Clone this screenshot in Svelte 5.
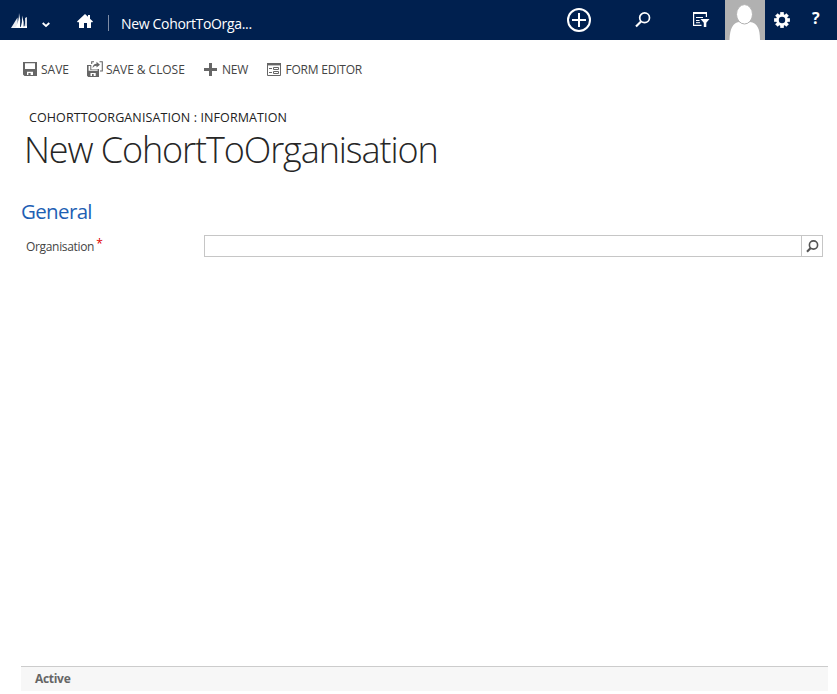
<script>
  const avatarFill = '#b1b1b1';
</script>

<div class="page">
  <header>
    <svg class="logo" width="18" height="16" viewBox="0 0 18 16">
      <path d="M0 15 L6.5 4.5 L7 15Z" fill="#e8ebf0" />
      <path d="M5 14 Q8 8 8 0 Q10 7 9 15Z" fill="#fff" />
      <path d="M9.6 15 Q11.5 9 11 2.5 Q13.4 9 12.6 15Z" fill="#fff" />
      <path d="M13.2 15 Q14.5 10 14 5 L16 4 V15Z" fill="#d5dae3" />
      <path d="M0 15 L16 13 V15Z" fill="#fff" />
    </svg>
    <svg class="chevron" width="8" height="6" viewBox="0 0 8 6"><path d="M.7 1 L4 4 L7.3 1" fill="none" stroke="#fff" stroke-width="1.8" /></svg>
    <svg class="home" width="16" height="15" viewBox="0 0 16 15"><path d="M8 0 L11 2.8 V1 H13 V4.7 L16 7.5 L15 8.5 L14 8 V14 H10 V9 H7 V14 H2 V8 L1 8.5 L0 7.5Z" fill="#fff" /></svg>
    <i class="divider"></i>
    <span class="crumb">New CohortToOrga...</span>
    <svg class="add" width="26" height="26" viewBox="0 0 26 26"><circle cx="13" cy="13" r="11" fill="none" stroke="#fff" stroke-width="2" /><path d="M13 6 V20 M6 13 H20" stroke="#fff" stroke-width="2" /></svg>
    <svg class="search" width="16" height="16" viewBox="0 0 16 16"><circle cx="9.6" cy="5.8" r="4.9" fill="none" stroke="#fff" stroke-width="1.7" /><path d="M6 9.5 L1 14.5" stroke="#fff" stroke-width="2.2" /></svg>
    <svg class="filter" width="17" height="16" viewBox="0 0 17 16">
      <path d="M13.4 5 V1 H.6 V13.4 H8.5" fill="none" stroke="#fff" stroke-width="1.2" /><path d="M0 1 H14" stroke="#fff" stroke-width="2" />
      <path d="M3 5.5 H10 M3 8.5 H6.5 M3 10.7 H7" stroke="#fff" stroke-width="1" />
      <path d="M7.5 7 H16.5 L13.3 10.7 V15 H10.8 V10.7Z" fill="#fff" />
    </svg>
    <svg class="avatar" width="40" height="40" viewBox="0 0 40 40"><rect width="40" height="40" fill={avatarFill} /><path d="M4.5 40 C5 28 8 23 14 22 Q19.5 25 25 22 C32 23 35 28 35 40Z" fill="#fff" /><ellipse cx="19.5" cy="14.3" rx="8" ry="9.7" fill="#fff" stroke={avatarFill} stroke-width="1" /></svg>
    <svg class="gear" width="16" height="16" viewBox="-8 -8 16 16">
      {#each [0, 45, 90, 135] as angle}
        <rect x="-1.8" y="-7.9" width="3.6" height="15.8" transform="rotate({angle})" fill="#fff" />
      {/each}
      <circle r="5.9" fill="#fff" /><circle r="3.2" fill="#00204f" />
    </svg>
    <span class="help">?</span>
  </header>

  <nav>
    <button class="save">
      <svg width="14" height="14" viewBox="0 0 14 14"><path d="M0 0 H14 V14 H1.5 L0 12.5Z M2 1.3 V7 H12 V1.3Z M4 9.7 V13 H5.4 V11 H7.6 V13 H10 V9.7Z" fill="#666" fill-rule="evenodd" /></svg><span>SAVE</span></button>
    <button class="close">
      <svg width="16" height="16" viewBox="0 0 16 16"><path d="M0 4 H4.3 V8.5 H10.7 V8 H12 V16 H1.2 L0 14.8Z M1.6 5 V9.8 H10.6 V9 H3.3 V5Z M3.5 12 V15 H5 V13 H6.7 V15 H8.7 V12Z" fill="#666" fill-rule="evenodd" /><path d="M4.7 3 V.7 H7 M12.5 .7 H15.3 V10 H13" fill="none" stroke="#666" stroke-width="1.1" /><path d="M5.5 7 Q5.8 3 9.5 2.8 V.8 L13 3.7 L9.5 6.5 V4.7 Q7 4.7 5.5 7Z" fill="#666" /></svg><span>SAVE &amp; CLOSE</span></button>
    <button class="new">
      <svg width="13" height="13" viewBox="0 0 13 13"><path d="M6.5 0 V13 M0 6.5 H13" stroke="#666" stroke-width="3" /></svg><span>NEW</span></button>
    <button class="editor">
      <svg width="14" height="13" viewBox="0 0 14 13"><path d="M.5 .5 H13.5 V12.5 H.5Z" fill="none" stroke="#666" /><path d="M0 1.2 H14" stroke="#666" stroke-width="2.4" /><path d="M2 5.5 H5 M2 9.5 H5 M6.5 4.5 H11.5 V6.5 H6.5Z M6.5 8.5 H11.5 V10.5 H6.5Z" fill="none" stroke="#666" /></svg><span>FORM EDITOR</span></button>
  </nav>

  <main>
    <div class="entity">COHORTTOORGANISATION : INFORMATION</div>
    <h1>New CohortToOrganisation</h1>
    <h2>General</h2>
    <div class="field">
      <label for="organisation">Organisation<sup>*</sup></label>
      <div class="lookup">
        <input id="organisation" type="text" />
        <button aria-label="Look up"><svg width="13" height="13" viewBox="0 0 13 13"><circle cx="7.5" cy="5" r="4.1" fill="none" stroke="#555" stroke-width="1.6" /><path d="M4.7 8 L1 11.7" stroke="#555" stroke-width="2.2" /></svg></button>
      </div>
    </div>
  </main>
  <footer>Active</footer>
</div>

<style>
  :global(body) { margin: 0; background: #fff; }
  .page { width: 837px; height: 694px; display: flex; flex-direction: column; overflow: hidden; font-family: "Open Sans", "Noto Sans", sans-serif; font-size: 12px; color: #444; }
  svg { display: block; flex: none; }
  header { height: 40px; flex: none; display: flex; align-items: flex-start; background: #00204f; color: #fff; }
  .logo { margin: 13px 0 0 11px; }
  .chevron { margin: 22px 0 0 13px; }
  .home { margin: 14px 0 0 27px; }
  .divider { width: 1px; height: 16px; margin: 15px 0 0 15px; background: #7e8ca5; }
  .crumb { width: 445px; margin: 14px 0 0 12px; font-size: 14px; line-height: 20px; letter-spacing: -.33px; white-space: nowrap; }
  .add { margin-top: 7px; }
  .search { margin: 12px 0 0 43px; }
  .filter { margin: 12px 0 0 42px; }
  .avatar { margin-left: 15px; }
  .gear { margin: 12px 0 0 9px; }
  .help { margin: 7px 0 0 22px; font-size: 16px; line-height: 22px; font-weight: 700; }
  button { display: flex; align-items: center; border: 0; padding: 0; background: none; color: #444; font: inherit; white-space: nowrap; }
  nav { height: 18px; flex: none; display: flex; margin: 20px 0 0 23px; line-height: 16px; }
  nav span { padding-top: 2px; }
  .save { width: 64px; gap: 4px; }
  .close { width: 117px; gap: 3px; letter-spacing: -.05px; }
  .new { width: 63px; gap: 5px; letter-spacing: -.2px; }
  .editor { gap: 4.5px; letter-spacing: -.22px; }
  main { flex: 1; padding: 31px 14px 0 21px; }
  .entity { margin-left: 8px; line-height: 18px; font-size: 12.5px; color: #222; letter-spacing: .1px; white-space: nowrap; }
  h1 { margin: 1px 0 0 3px; font-size: 36px; line-height: 44px; font-weight: 300; color: #262626; letter-spacing: -1.1px; white-space: nowrap; }
  h2 { margin: 25px 0 0; font-size: 20.5px; line-height: 28px; font-weight: 400; color: #1e5fb4; letter-spacing: -.65px; }
  .field { display: flex; align-items: flex-start; margin-top: 10px; }
  label { width: 178px; margin-left: 5px; line-height: 24px; letter-spacing: -.33px; }
  sup { margin-left: 2px; font-size: 12px; line-height: 0; vertical-align: 3px; color: #e00000; }
  .lookup { flex: 1; height: 20px; display: flex; border: 1px solid #c6c6c6; }
  input { flex: 1; min-width: 0; border: 0; padding: 0 4px; outline: 0; font: inherit; }
  .lookup button { width: 21px; justify-content: center; border-left: 1px solid #c6c6c6; }
  footer { height: 24px; flex: none; margin: 0 9px 3px 21px; padding-left: 14px; border-top: 1px solid #ccc; background: #f7f7f7; line-height: 24px; font-weight: 700; color: #666; letter-spacing: -.3px; }
</style>
